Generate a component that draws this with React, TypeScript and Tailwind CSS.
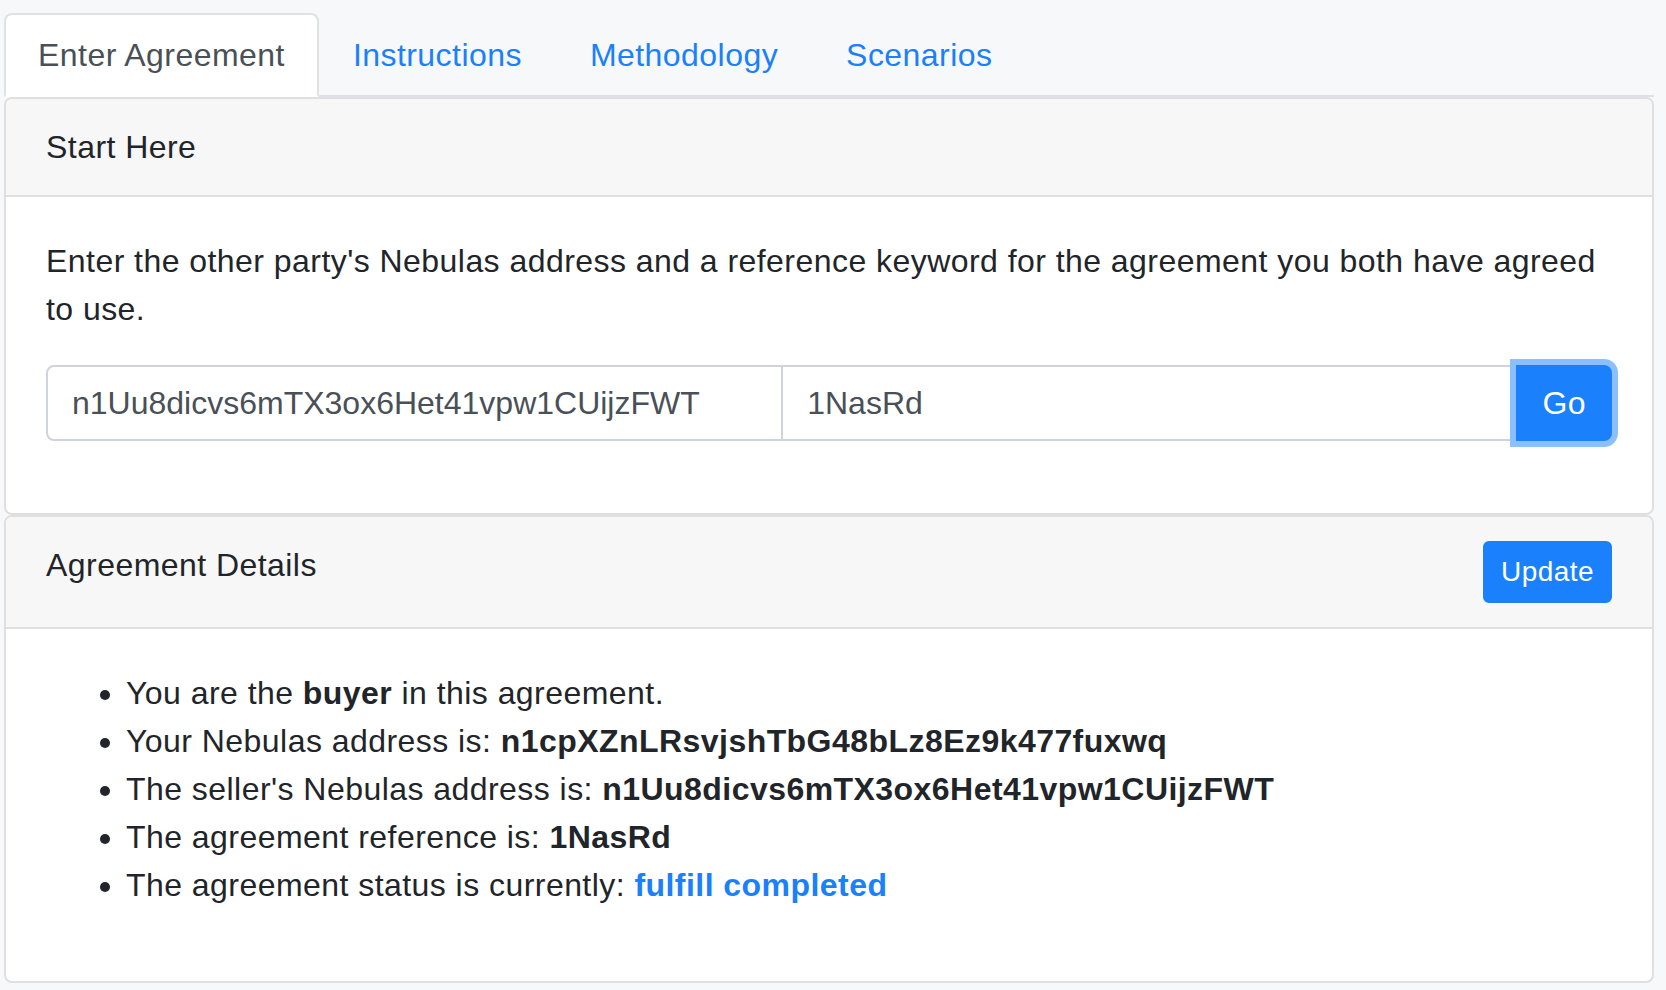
import React from "react";

export default function App() {
  const blue = "text-[#1a80fb]";
  return (
    <div className="min-h-screen bg-[#f7f8fa] pl-[4px] pr-[12px] pt-[13px] font-['Liberation_Sans',Arial,sans-serif] text-[32px] leading-[48px] tracking-[0.45px] text-[#212529]">
      <ul className="flex border-b-2 border-[#dee1e6]">
        <li className="-mb-[2px]">
          <a className="block px-[32px] py-[16px] border-2 border-[#dee1e6] border-b-white bg-white rounded-t-[8px] text-[#495057]">
            Enter Agreement
          </a>
        </li>
        <li className="-mb-[2px]">
          <a className={`block px-[32px] py-[16px] border-2 border-transparent ${blue}`}>Instructions</a>
        </li>
        <li className="-mb-[2px]">
          <a className={`block px-[32px] py-[16px] border-2 border-transparent ${blue}`}>Methodology</a>
        </li>
        <li className="-mb-[2px]">
          <a className={`block px-[32px] py-[16px] border-2 border-transparent ${blue}`}>Scenarios</a>
        </li>
      </ul>

      <div className="border-2 border-[#dfdfdf] rounded-[8px] bg-white overflow-hidden">
        <div className="bg-[#f7f7f7] px-[40px] py-[24px] border-b-2 border-[#dfdfdf]">Start Here</div>
        <div className="p-[40px]">
          <p className="mb-[32px]">
            Enter the other party's Nebulas address and a reference keyword for the agreement you both have agreed to use.
          </p>
          <div className="flex h-[76px] mb-[32px]">
            <input
              readOnly
              value="n1Uu8dicvs6mTX3ox6Het41vpw1CUijzFWT"
              className="flex-1 min-w-0 h-full border-2 border-[#ced4da] rounded-l-[8px] px-[24px] text-[#495057] tracking-normal bg-white outline-none"
            />
            <input
              readOnly
              value="1NasRd"
              className="flex-1 min-w-0 h-full -ml-[2px] border-2 border-[#ced4da] px-[24px] text-[#495057] tracking-normal bg-white outline-none"
            />
            <button className="relative z-10 -ml-[2px] h-full px-[24px] bg-[#1a80fb] text-white rounded-r-[8px] border-2 border-[#1a80fb] shadow-[0_0_0_6px_#8cbffd]">
              Go
            </button>
          </div>
        </div>
      </div>

      <div className="border-2 border-[#dfdfdf] rounded-[8px] bg-white overflow-hidden">
        <div className="flex items-start justify-between bg-[#f7f7f7] px-[40px] py-[24px] border-b-2 border-[#dfdfdf]">
          <div>Agreement Details</div>
          <button className="bg-[#1a80fb] text-white text-[28px] leading-[42px] px-[16px] py-[8px] rounded-[6px] border-2 border-[#1a80fb]">
            Update
          </button>
        </div>
        <div className="p-[40px]">
          <ul className="list-disc pl-[80px] mb-[32px]">
            <li>
              You are the <b>buyer</b> in this agreement.
            </li>
            <li>
              Your Nebulas address is: <b>n1cpXZnLRsvjshTbG48bLz8Ez9k477fuxwq</b>
            </li>
            <li>
              The seller's Nebulas address is: <b>n1Uu8dicvs6mTX3ox6Het41vpw1CUijzFWT</b>
            </li>
            <li>
              The agreement reference is: <b>1NasRd</b>
            </li>
            <li>
              The agreement status is currently: <b className={blue}>fulfill completed</b>
            </li>
          </ul>
        </div>
      </div>
    </div>
  );
}
